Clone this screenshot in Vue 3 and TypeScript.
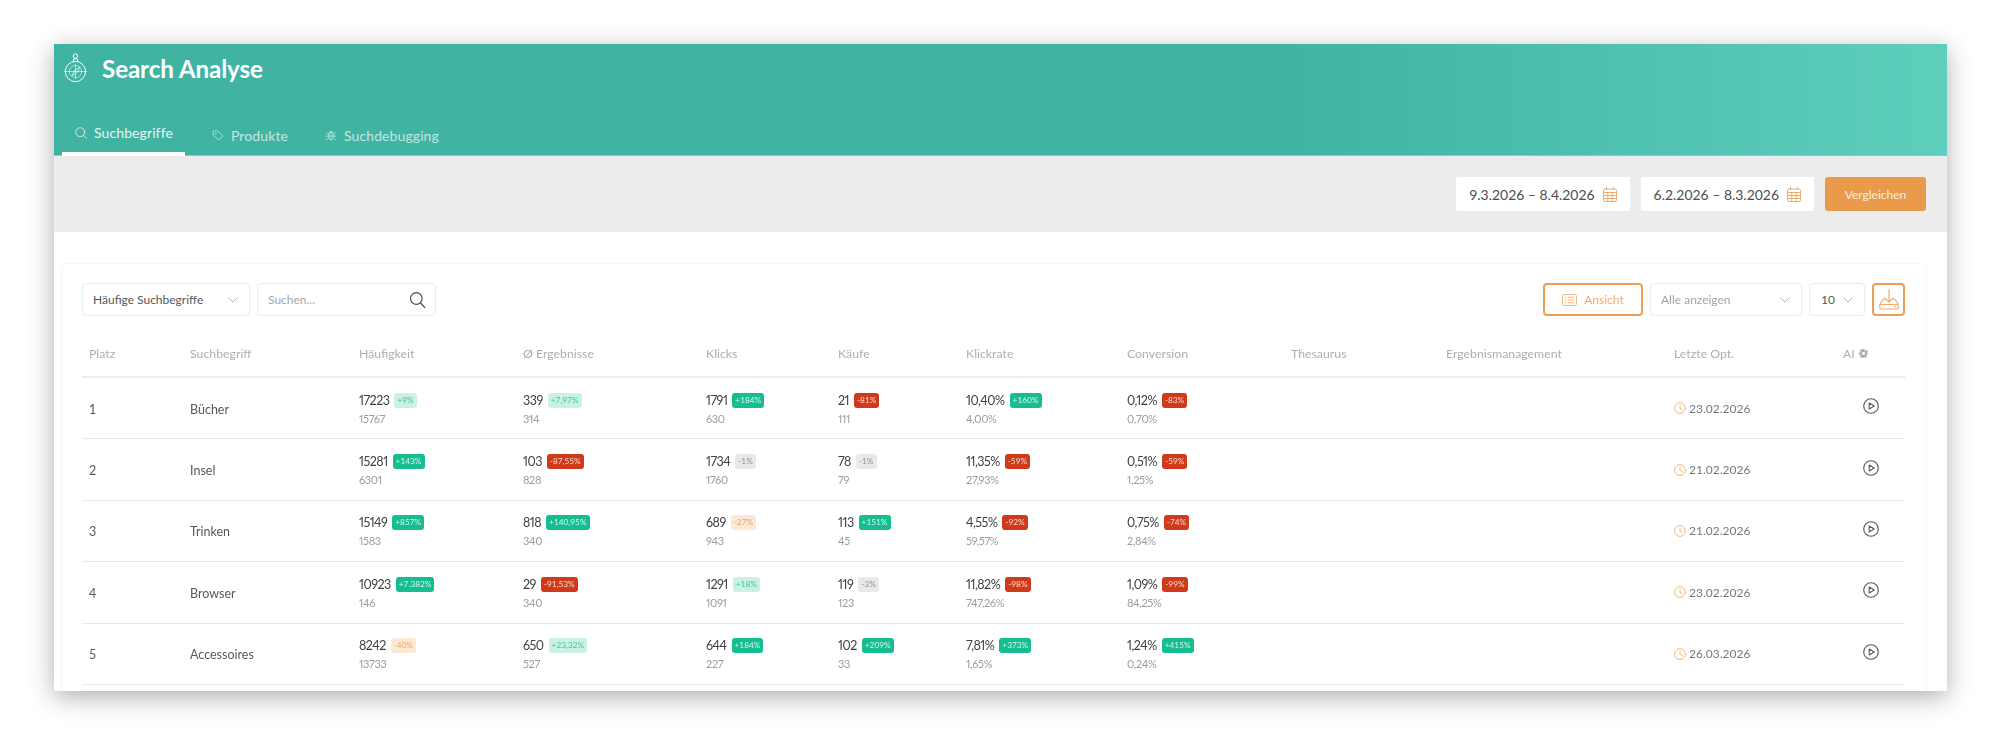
<script setup lang="ts">
type Tone = 'up' | 'soft-up' | 'down' | 'flat' | 'warn';

interface Metric {
  value: string;
  delta: string;
  tone: Tone;
  previous: string;
}

interface Row {
  rank: number;
  term: string;
  metrics: Metric[];
  date: string;
}

const m = (value: string, delta: string, tone: Tone, previous: string): Metric => ({ value, delta, tone, previous });

const headers = ['Platz', 'Suchbegriff', 'Häufigkeit', 'Ø Ergebnisse', 'Klicks', 'Käufe', 'Klickrate', 'Conversion', 'Thesaurus', 'Ergebnismanagement', 'Letzte Opt.'];

const rows: Row[] = [
  {
    rank: 1,
    term: 'Bücher',
    date: '23.02.2026',
    metrics: [
      m('17223', '+9%', 'soft-up', '15767'),
      m('339', '+7,97%', 'soft-up', '314'),
      m('1791', '+184%', 'up', '630'),
      m('21', '-81%', 'down', '111'),
      m('10,40%', '+160%', 'up', '4,00%'),
      m('0,12%', '-83%', 'down', '0,70%'),
    ],
  },
  {
    rank: 2,
    term: 'Insel',
    date: '21.02.2026',
    metrics: [
      m('15281', '+143%', 'up', '6301'),
      m('103', '-87,55%', 'down', '828'),
      m('1734', '-1%', 'flat', '1760'),
      m('78', '-1%', 'flat', '79'),
      m('11,35%', '-59%', 'down', '27,93%'),
      m('0,51%', '-59%', 'down', '1,25%'),
    ],
  },
  {
    rank: 3,
    term: 'Trinken',
    date: '21.02.2026',
    metrics: [
      m('15149', '+857%', 'up', '1583'),
      m('818', '+140,95%', 'up', '340'),
      m('689', '-27%', 'warn', '943'),
      m('113', '+151%', 'up', '45'),
      m('4,55%', '-92%', 'down', '59,57%'),
      m('0,75%', '-74%', 'down', '2,84%'),
    ],
  },
  {
    rank: 4,
    term: 'Browser',
    date: '23.02.2026',
    metrics: [
      m('10923', '+7.382%', 'up', '146'),
      m('29', '-91,53%', 'down', '340'),
      m('1291', '+18%', 'soft-up', '1091'),
      m('119', '-3%', 'flat', '123'),
      m('11,82%', '-98%', 'down', '747,26%'),
      m('1,09%', '-99%', 'down', '84,25%'),
    ],
  },
  {
    rank: 5,
    term: 'Accessoires',
    date: '26.03.2026',
    metrics: [
      m('8242', '-40%', 'warn', '13733'),
      m('650', '+23,32%', 'soft-up', '527'),
      m('644', '+184%', 'up', '227'),
      m('102', '+209%', 'up', '33'),
      m('7,81%', '+373%', 'up', '1,65%'),
      m('1,24%', '+415%', 'up', '0,24%'),
    ],
  },
];

const dateRanges = ['9.3.2026 – 8.4.2026', '6.2.2026 – 8.3.2026'];
</script>

<template>
  <div class="page">
    <div class="window">
      <header class="top">
        <div class="brand">
          <svg class="logo" viewBox="0 0 26 34" fill="none" stroke="currentColor" stroke-width="1.1" stroke-linecap="round">
            <circle cx="13" cy="21" r="11.500" />
            <circle cx="13" cy="21" r="7" stroke-width=".6" />
            <path d="M10.500 9.500 11 6.500h4l.5 3M10.500 3.500a2.500 2.500 0 1 1 5 0 2.500 2.500 0 0 1-5 0z" />
            <path d="M0 21h4M22 21h4M13 13v16M5 21h16" stroke-width=".7" />
            <path d="m18 16-3.500 6.500L9 26l2.500-5.500z" stroke-width=".8" />
          </svg>
          <h1 class="title">Search Analyse</h1>
        </div>
        <nav class="tabs">
          <a class="tab active">
            <svg viewBox="0 0 16 16" fill="none" stroke="currentColor" stroke-width="1.100" stroke-linecap="round">
              <circle cx="7" cy="7" r="6" />
              <path d="m11.300 11.300 4 4" />
            </svg>
            Suchbegriffe
          </a>
          <a class="tab">
            <svg viewBox="0 0 16 16" fill="none" stroke="currentColor" stroke-width="1.100" stroke-linejoin="round">
              <path d="M1.500 2.500h6.200l6.800 6.800-5.500 5.200L1.500 8z" />
              <circle cx="5" cy="6" r=".7" />
            </svg>
            Produkte
          </a>
          <a class="tab">
            <svg viewBox="0 0 16 16" fill="none" stroke="currentColor" stroke-width="1" stroke-linecap="round">
              <ellipse cx="8" cy="9.500" rx="3.500" ry="5" />
              <path d="M5.500 5.500a2.500 2.500 0 0 1 5 0M8 6v8.500M4.500 9.500h7M1 9.500h3.500M11.500 9.500H15M2 5l3 2.500M14 5l-3 2.500M2 14.500l3-2.500M14 14.500l-3-2.500" />
            </svg>
            Suchdebugging
          </a>
        </nav>
      </header>

      <section class="range-bar">
        <div v-for="range in dateRanges" :key="range" class="range">
          <span>{{ range }}</span>
          <svg class="cal" viewBox="0 0 14 15" fill="none" stroke="currentColor" stroke-width="1">
            <rect x=".5" y="2" width="13" height="12.500" rx="1.500" />
            <path d="M3.500 0v3M10.500 0v3M.5 5.500h13M.5 8.500h13M.5 11.500h13M4.800 5.500v9M9.200 5.500v9" />
          </svg>
        </div>
        <button class="compare">Vergleichen</button>
      </section>

      <main class="content">
        <div class="card">
          <div class="toolbar">
            <div class="tool-group">
              <div class="select term-select">
                <span>Häufige Suchbegriffe</span>
                <svg class="chev" viewBox="0 0 10 6" fill="none" stroke="currentColor"><path d="m.5.500 4.500 4.500L9.500.500" /></svg>
              </div>
              <div class="select search">
                <span>Suchen...</span>
                <svg class="loupe" viewBox="0 0 16 16" fill="none" stroke="currentColor" stroke-width="1.200" stroke-linecap="round">
                  <circle cx="6.800" cy="6.500" r="5.800" />
                  <path d="m11 11 4.300 4.500" />
                </svg>
              </div>
            </div>
            <div class="tool-group">
              <button class="outline view">
                <svg viewBox="0 0 16 13" fill="none" stroke="currentColor" stroke-width="1">
                  <rect x=".5" y=".5" width="15" height="12" rx="2" />
                  <path d="M3 3.500h1.500M6 3.500h7M3 6.500h1.500M6 6.500h7M3 9.500h1.500M6 9.500h7" />
                </svg>
                Ansicht
              </button>
              <div class="select all-select">
                <span>Alle anzeigen</span>
                <svg class="chev" viewBox="0 0 10 6" fill="none" stroke="currentColor"><path d="m.5.500 4.500 4.500L9.500.500" /></svg>
              </div>
              <div class="select size-select">
                <span>10</span>
                <svg class="chev" viewBox="0 0 10 6" fill="none" stroke="currentColor"><path d="m.5.500 4.500 4.500L9.500.500" /></svg>
              </div>
              <button class="outline download">
                <svg viewBox="0 0 20 21" fill="none" stroke="currentColor" stroke-width="1.200" stroke-linecap="round" stroke-linejoin="round">
                  <path d="M10 .7v12M5.800 8.800 10 13l4.200-4.200" />
                  <path d="M6 10.500H4L.8 15.500v3a1.500 1.500 0 0 0 1.500 1.500h15.400a1.500 1.500 0 0 0 1.500-1.500v-1.500a1.500 1.500 0 0 0-1.500-1.500H2M14 10.500h2l3 4.500M15.800 17.600h.8" />
                </svg>
              </button>
            </div>
          </div>

          <div class="table">
            <div class="thead">
              <div v-for="head in headers" :key="head" class="th">{{ head }}</div>
              <div class="th ai">
                AI
                <svg viewBox="0 0 10 10" fill="currentColor">
                  <path d="M4 0h2l.3 1.400 1.100.5L8.600 1.100 10 2.500 9.100 3.700l.5 1.100L10 6l-1.400.5-.5.900.9 1.200L7.500 10l-1.200-.9-.3.1L5 10l-1.300-.8-1.200.8L1 8.600l.8-1.200-.4-.9L0 6V4l1.400-.3.400-1L1 1.400 2.500 0l1.200.8z" />
                  <circle cx="5" cy="5" r="1.600" fill="#fff" />
                </svg>
              </div>
            </div>
            <div v-for="row in rows" :key="row.rank" class="tr">
              <div class="td plain">{{ row.rank }}</div>
              <div class="td plain">{{ row.term }}</div>
              <div v-for="metric in row.metrics" :key="metric.previous + metric.delta" class="td">
                <div class="now">
                  <span class="value">{{ metric.value }}</span>
                  <span class="badge" :class="metric.tone">{{ metric.delta }}</span>
                </div>
                <div class="before">{{ metric.previous }}</div>
              </div>
              <div class="td"></div>
              <div class="td"></div>
              <div class="td last-opt">
                <svg viewBox="0 0 12 12" fill="none" stroke="currentColor" stroke-width="1" stroke-linecap="round">
                  <circle cx="6" cy="6" r="5.400" />
                  <path d="M6 3v3.200l2 1.400" />
                </svg>
                <span>{{ row.date }}</span>
              </div>
              <div class="td run">
                <svg viewBox="0 0 16 16" fill="none" stroke="currentColor" stroke-width="1.100" stroke-linejoin="round">
                  <circle cx="8" cy="8" r="7.300" />
                  <path d="M6.200 5v6L11.200 8z" />
                </svg>
              </div>
            </div>
          </div>
        </div>
      </main>
    </div>
  </div>
</template>

<style>
html,
body {
  margin: 0;
  background: #fff;
}
</style>

<style scoped>
.page {
  height: 735px;
  padding: 44px 53px 44px 54px;
  box-sizing: border-box;
  font-family: Lato, "Noto Sans", sans-serif;
  overflow: hidden;
}

.window {
  height: 647px;
  background: #fff;
  overflow: hidden;
  box-shadow: 0 6px 24px rgba(0, 0, 0, .32);
  filter: blur(.35px);
}

.top {
  height: 112px;
  box-sizing: border-box;
  border-bottom: 1px solid #7fd0c3;
  background: linear-gradient(90deg, #41b3a3 0%, #41b3a3 65%, #5ecfbd 100%);
  color: #fff;
  padding: 0 0 0 8px;
  display: flex;
  flex-direction: column;
}

.brand {
  display: flex;
  align-items: center;
  gap: 15px;
  height: 42px;
  margin-top: 1px;
  padding-top: 2px;
}

.logo {
  width: 23px;
  height: 30px;
  margin-left: 2px;
}

.title {
  margin: 0;
  font-size: 24.200px;
  font-weight: 700;
  letter-spacing: -.1px;
}

.tabs {
  display: flex;
  margin-top: auto;
  margin-bottom: -1px;
}

.tab {
  display: flex;
  align-items: center;
  gap: 7px;
  height: 45px;
  padding: 3px 19px 0 13px;
  box-sizing: border-box;
  margin-right: 5px;
  font-size: 14px;
  letter-spacing: .1px;
  color: #c3e7e1;
}

.tab svg {
  width: 12px;
  height: 12px;
  flex-shrink: 0;
}

.tab.active {
  color: #e4f5f2;
  border-bottom: 4px solid #fff;
  padding: 2px 0 0 13px;
  width: 123px;
  margin-right: 14px;
}

.range-bar {
  height: 76px;
  box-sizing: border-box;
  background: #ececec;
  display: flex;
  justify-content: flex-end;
  align-items: center;
  gap: 11px;
  padding: 0 21px 0 0;
}

.range {
  height: 34px;
  box-sizing: border-box;
  background: #fff;
  display: flex;
  align-items: center;
  gap: 8px;
  padding: 0 13px;
  font-size: 13.950px;
  color: #4a4d52;
  border-radius: 2px;
}

.cal {
  width: 14px;
  height: 15px;
  color: #f0ab6a;
}

.compare {
  width: 101px;
  height: 34px;
  border: 0;
  border-radius: 3px;
  background: #e99a4a;
  color: #fbeee0;
  font: inherit;
  font-size: 12px;
}

.content {
  padding: 31px 20px 0 7px;
}

.card {
  border: 1px solid #f7f7f7;
  border-radius: 5px;
  padding: 19px 21px 0 20px;
  height: 460px;
}

.toolbar {
  display: flex;
  justify-content: space-between;
}

.tool-group {
  display: flex;
  gap: 7px;
}

.select {
  height: 33px;
  box-sizing: border-box;
  border: 1px solid #ebebeb;
  border-radius: 4px;
  display: flex;
  align-items: center;
  justify-content: space-between;
  font-size: 12px;
  color: #55585c;
  background: #fff;
}

.term-select {
  width: 168px;
  padding: 0 11px 0 10px;
}

.search {
  width: 179px;
  padding: 0 9px 0 10px;
  color: #a3a5a8;
}

.all-select {
  width: 152px;
  padding: 0 11px 0 10px;
  color: #a3a5a8;
}

.size-select {
  width: 56px;
  padding: 0 11px 0 11px;
}

.chev {
  width: 10px;
  height: 6px;
  color: #b5b7ba;
}

.loupe {
  width: 17px;
  height: 16px;
  color: #4a4d52;
}

.outline {
  height: 33px;
  box-sizing: border-box;
  border: 2px solid #ec9f55;
  border-radius: 4px;
  background: #fff;
  color: #f0ab6a;
  font: inherit;
  font-size: 12px;
  display: flex;
  align-items: center;
  justify-content: center;
  padding: 0;
}

.view {
  width: 100px;
  gap: 7px;
}

.view svg {
  width: 15px;
  height: 12px;
}

.download {
  width: 33px;
}

.download svg {
  width: 20px;
  height: 21px;
}

.table {
  margin-top: 23px;
}

.thead,
.tr {
  display: grid;
  grid-template-columns: 101px 169px 164px 183px 132px 128px 161px 164px 155px 228px 169px 69px;
}

.thead {
  height: 39px;
  box-sizing: border-box;
  border-bottom: 2px solid #ececec;
  align-items: center;
  padding-bottom: 8px;
}

.th {
  padding-left: 7px;
  font-size: 12.300px;
  color: #acaeb0;
  white-space: nowrap;
}

.th.ai {
  display: flex;
  align-items: center;
  gap: 4px;
}

.th.ai svg {
  width: 9px;
  height: 9px;
}

.tr {
  height: 61.400px;
  box-sizing: border-box;
  border-bottom: 1px solid #e9e9e9;
  align-items: center;
}

.td {
  padding-left: 7px;
  min-width: 0;
}

.plain {
  padding-top: 2px;
  font-size: 12.500px;
  color: #55585c;
}

.now {
  display: flex;
  align-items: center;
  height: 15px;
  margin-top: 1px;
}

.value {
  font-size: 12.500px;
  letter-spacing: -.5px;
  font-variant-numeric: proportional-nums;
  color: #3d4046;
}

.badge {
  margin-left: 5px;
  height: 15px;
  line-height: 15px;
  padding: 0 3px;
  border-radius: 3px;
  font-size: 8.300px;
  white-space: nowrap;
}

.badge.up {
  background: #15bd91;
  color: #d5f5ec;
}

.badge.soft-up {
  background: #c9f2e4;
  color: #45c49f;
}

.badge.down {
  background: #cf3a1a;
  color: #f9d9d0;
}

.badge.flat {
  background: #e9e9e9;
  color: #8f9194;
}

.badge.warn {
  background: #fbe9d8;
  color: #eea35d;
}

.before {
  margin-top: 4px;
  font-size: 11px;
  letter-spacing: -.35px;
  font-variant-numeric: proportional-nums;
  color: #9b9da0;
}

.last-opt {
  display: flex;
  align-items: center;
  gap: 3px;
  font-size: 12px;
  color: #75787c;
}

.last-opt svg {
  width: 12px;
  height: 12px;
  color: #f2b57a;
}

.run {
  padding-left: 27px;
  display: flex;
  margin-top: -4px;
}

.run svg {
  width: 16px;
  height: 16px;
  color: #55585c;
}
</style>
